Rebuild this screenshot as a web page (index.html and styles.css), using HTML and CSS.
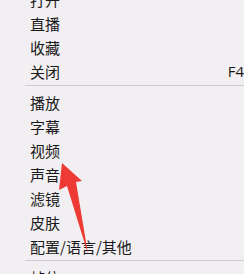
FILE: index.html
```html
<!DOCTYPE html>
<html>
<head>
<meta charset="utf-8">
<link rel="stylesheet" href="styles.css">
</head>
<body>
<div class="menu">
  <div class="item">打开</div>
  <div class="item">直播</div>
  <div class="item">收藏</div>
  <div class="item"><span class="label">关闭</span><span class="key">F4</span></div>
  <div class="sep"></div>
  <div class="item">播放</div>
  <div class="item">字幕</div>
  <div class="item">视频</div>
  <div class="item">声音</div>
  <div class="item">滤镜</div>
  <div class="item">皮肤</div>
  <div class="item">配置/语言/其他</div>
  <div class="sep"></div>
  <div class="item">帧位</div>
</div>
<svg class="arrow" width="244" height="274" viewBox="0 0 244 274">
  <polygon points="62,163 82,181 76,182 88,254 67,186 59,190" fill="#ee3a35"/>
</svg>
</body>
</html>
```
FILE: styles.css
```css
html, body {
  margin: 0;
  padding: 0;
  background: #f2eff2;
  width: 244px;
  height: 274px;
  overflow: hidden;
}
body {
  position: relative;
  font-family: "Noto Sans CJK SC", "Noto Sans", sans-serif;
  color: #1a1a1a;
  font-size: 15px;
}
.menu {
  margin-top: -13px;
  display: flex;
  flex-direction: column;
}
.item {
  height: 24px;
  display: flex;
  align-items: center;
  padding-left: 30px;
  line-height: 1;
  white-space: nowrap;
}
.key {
  margin-left: auto;
  font-family: "Open Sans", "Liberation Sans", sans-serif;
  font-size: 15px;
}
.sep {
  height: 7px;
  margin-left: 25px;
  box-sizing: border-box;
  padding-top: 2px;
}
.sep::before {
  content: "";
  display: block;
  height: 1px;
  background: #cfcccf;
}
.arrow {
  position: absolute;
  left: 0;
  top: 0;
}
```
